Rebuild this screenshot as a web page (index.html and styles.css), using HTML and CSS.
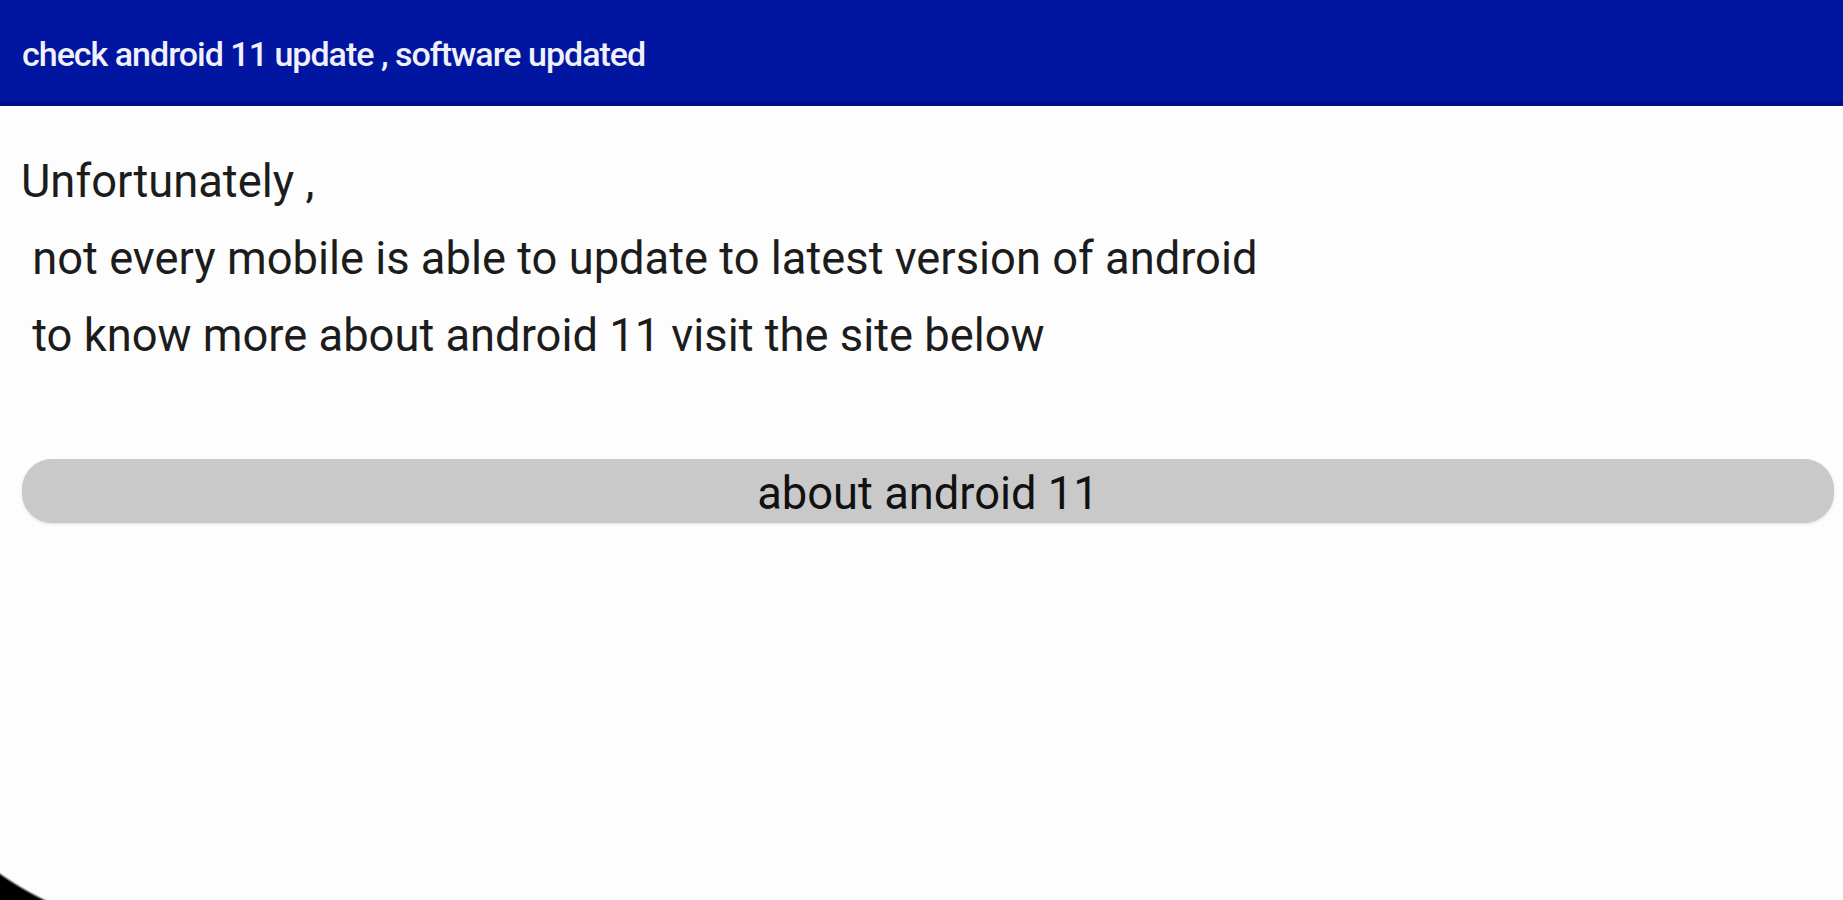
FILE: index.html
```html
<!DOCTYPE html>
<html>
<head>
    <title>check android 11 update , software updated</title>
    <link rel="stylesheet" href="styles.css">
</head>
<body>
    <div class="screen">
        <div class="toolbar">
            <span class="toolbar-title">check android 11 update , software updated</span>
        </div>
        <div class="content">
            <p class="line">Unfortunately ,</p>
            <p class="line">&nbsp;not every mobile is able to update to latest version of android</p>
            <p class="line">&nbsp;to know more about android 11 visit the site below</p>
            <button class="about-btn" type="button">about android 11</button>
        </div>
        <div class="screen-corner"></div>
    </div>
</body>
</html>
```

FILE: styles.css
```css
html, body {
    margin: 0;
    height: 100%;
    background-color: #fdfdfd;
}

body {
    font-family: Roboto, "Liberation Sans", sans-serif;
    overflow: hidden;
}

.screen {
    position: relative;
    height: 100%;
}

.toolbar {
    height: 101px;
    background-color: #0016a1;
    border-bottom: 5px solid #000e8a;
    display: flex;
    align-items: center;
    padding-left: 22px;
}

.toolbar-title {
    color: #f0f0fa;
    font-size: 34px;
    font-weight: 500;
    letter-spacing: -1px;
    margin-top: 7px;
}

.content {
    padding: 37px 10px 0 21px;
}

.line {
    margin: 0;
    font-size: 45.3px;
    line-height: 77px;
    color: #1c1c1c;
    white-space: pre;
}

.about-btn {
    display: block;
    width: 100%;
    height: 64px;
    margin-top: 85px;
    margin-left: 1px;
    border: none;
    border-radius: 30px;
    background-color: #c9c9c9;
    box-shadow: 0 1px 3px rgba(0, 0, 0, 0.12);
    font-family: Roboto, "Liberation Sans", sans-serif;
    font-size: 45.3px;
    color: #111;
    padding: 4px 0 0 0;
}

/* rounded corner of the phone screen */
.screen-corner {
    position: absolute;
    left: 0;
    bottom: 0;
    width: 60px;
    height: 30px;
    background: radial-gradient(circle 317px at 182px -255px, transparent 315px, #000 318px);
}
```
